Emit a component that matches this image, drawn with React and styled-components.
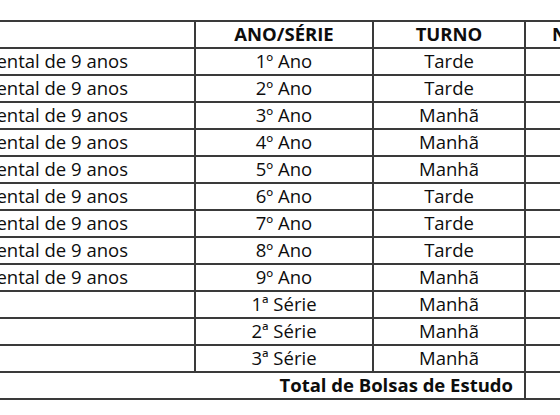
import React from "react";
import styled, { createGlobalStyle } from "styled-components";

const Global = createGlobalStyle`
  html, body {
    margin: 0;
    padding: 0;
    background: #fff;
  }
  body {
    width: 560px;
    height: 415px;
    overflow: hidden;
  }
`;

const rows = [
  ["Ensino Fundamental de 9 anos", "1º Ano", "Tarde"],
  ["Ensino Fundamental de 9 anos", "2º Ano", "Tarde"],
  ["Ensino Fundamental de 9 anos", "3º Ano", "Manhã"],
  ["Ensino Fundamental de 9 anos", "4º Ano", "Manhã"],
  ["Ensino Fundamental de 9 anos", "5º Ano", "Manhã"],
  ["Ensino Fundamental de 9 anos", "6º Ano", "Tarde"],
  ["Ensino Fundamental de 9 anos", "7º Ano", "Tarde"],
  ["Ensino Fundamental de 9 anos", "8º Ano", "Tarde"],
  ["Ensino Fundamental de 9 anos", "9º Ano", "Manhã"],
  ["", "1ª Série", "Manhã"],
  ["", "2ª Série", "Manhã"],
  ["", "3ª Série", "Manhã"],
];

function App() {
  return (
    <Sheet>
      <Global />
      <Table>
        <colgroup>
          <col style={{ width: 360 }} />
          <col style={{ width: 178 }} />
          <col style={{ width: 152 }} />
          <col style={{ width: 160 }} />
        </colgroup>
        <thead>
          <tr>
            <Head />
            <Head>ANO/SÉRIE</Head>
            <Head>TURNO</Head>
            <Head $left>Nº DE BOLSAS</Head>
          </tr>
        </thead>
        <tbody>
          {rows.map(([level, grade, shift], i) => (
            <tr key={i}>
              <Level>{level}</Level>
              <Cell>{grade}</Cell>
              <Cell>{shift}</Cell>
              <Cell />
            </tr>
          ))}
          <tr>
            <Total colSpan={3}>Total de Bolsas de Estudo</Total>
            <Cell />
          </tr>
        </tbody>
      </Table>
    </Sheet>
  );
}

export default App;

const Sheet = styled.div`
  width: 560px;
  height: 415px;
  overflow: hidden;
  padding-top: 20px;
  box-sizing: border-box;
  font-family: "Open Sans", "Noto Sans", sans-serif;
  color: #0d0d0d;
`;

const Table = styled.table`
  border-collapse: collapse;
  table-layout: fixed;
  margin-left: -166px;
  width: 850px;
  font-size: 18.5px;

  td,
  th {
    border: 2px solid #3a3a3a;
    height: 27px;
    padding: 0 4px;
    box-sizing: border-box;
    white-space: nowrap;
    overflow: hidden;
    line-height: 1;
  }
`;

const Head = styled.th`
  font-weight: 700;
  text-align: ${(p) => (p.$left ? "left" : "center")};
  padding-left: ${(p) => (p.$left ? "26px" : "4px")} !important;
`;

const Cell = styled.td`
  font-weight: 400;
  text-align: center;
`;

const Level = styled.td`
  font-weight: 400;
  text-align: right;
  padding-right: 66px !important;
`;

const Total = styled.td`
  font-weight: 700;
  text-align: right;
  padding-right: 11px !important;
`;
